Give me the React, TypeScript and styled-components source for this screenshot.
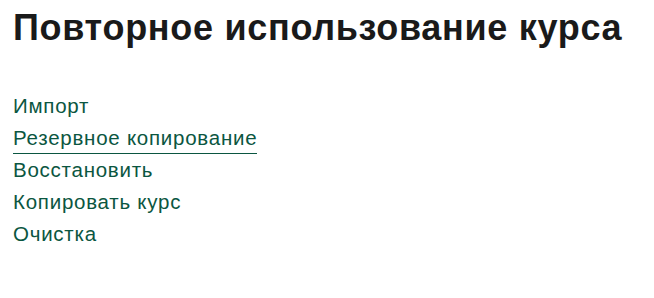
import styled, { createGlobalStyle } from 'styled-components'

const GlobalStyle = createGlobalStyle`
  html, body {
    margin: 0;
    padding: 0;
    background: #ffffff;
  }

  body {
    font-family: "Liberation Sans", Arial, sans-serif;
  }
`

const Page = styled.main`
  padding: 10px 13px;
`

const Title = styled.h1`
  margin: 0 0 44px 0;
  font-size: 36px;
  font-weight: 700;
  line-height: 36px;
  color: #1a1a1a;
  letter-spacing: 0.7px;
`

const List = styled.ul`
  list-style: none;
  margin: 0;
  padding: 0;
  display: flex;
  flex-direction: column;
`

const Item = styled.li`
  height: 32px;
`

const Link = styled.a<{ $active?: boolean }>`
  display: inline-block;
  font-size: 20.5px;
  line-height: 31px;
  letter-spacing: 0.75px;
  color: #0b5641;
  text-decoration: none;
  border-bottom: 1px solid ${p => (p.$active ? '#0b5641' : 'transparent')};
`

const links = [
  'Импорт',
  'Резервное копирование',
  'Восстановить',
  'Копировать курс',
  'Очистка',
]

export default function App() {
  return (
    <>
      <GlobalStyle />
      <Page>
        <Title>Повторное использование курса</Title>
        <List>
          {links.map((l, i) => (
            <Item key={l}>
              <Link href="#" $active={i === 1}>{l}</Link>
            </Item>
          ))}
        </List>
      </Page>
    </>
  )
}
